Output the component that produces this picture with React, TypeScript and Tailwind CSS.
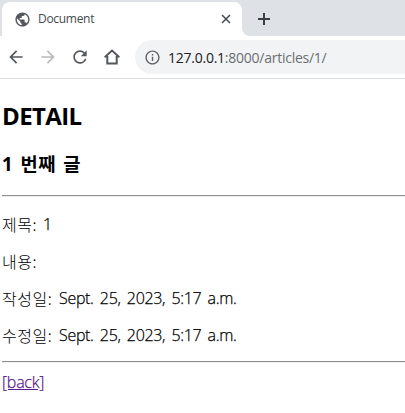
import { MdPublic, MdArrowBack, MdArrowForward, MdRefresh, MdInfoOutline } from 'react-icons/md';

const latin = "font-['Open_Sans','Noto_Sans_CJK_KR',sans-serif]";
const korean = "font-['Noto_Sans_CJK_KR',sans-serif]";

function Row({ label, labelClass, value }: { label: string; labelClass: string; value: string }) {
  return (
    <p className="mb-4 flex h-[21px] items-center whitespace-pre text-[16px] leading-[21px]">
      <span className={`${korean} ${labelClass} shrink-0 pt-px font-light tracking-[0.5px]`}>{label}</span>
      <span className={`${latin} pt-px font-light tracking-[-0.32px] [-webkit-text-stroke:0.25px] [word-spacing:2.4px]`}>{value}</span>
    </p>
  );
}

function Rule() {
  return <hr className="h-[2px] border-0 border-t border-t-[#8f8f8f] bg-[#eeeeee]" />;
}

export default function App() {
  return (
    <div className={`${latin} h-[413px] w-[405px] overflow-hidden bg-white text-black`}>
      <header>
        <div className="flex h-9 bg-[#dee1e6] pl-[2px] pt-[2px]">
          <div className="flex h-[34px] w-[240px] items-center rounded-t-lg bg-white pl-[12px] pr-[10px]">
            <MdPublic className="size-[17px] text-[#54585d]" />
            <span className="ml-[7px] text-[12px] tracking-[-0.3px] text-[#45494d]">Document</span>
            <svg className="ml-auto size-3" viewBox="0 0 12 12" fill="none" stroke="#45494d" strokeWidth="1.5">
              <path d="M2 2l8 8M10 2l-8 8" />
            </svg>
          </div>
          <div className="flex w-2 items-end bg-white">
            <div className="h-full w-full rounded-bl-lg bg-[#dee1e6]" />
          </div>
          <svg className="ml-[7px] mt-[10px] size-[14px]" viewBox="0 0 14 14" fill="none" stroke="#3c4043" strokeWidth="2">
            <path d="M7 1v12M1 7h12" />
          </svg>
        </div>
        <div className="flex h-[43px] items-center border-b border-[#dadce0] text-[#54585d]">
          <MdArrowBack className="ml-[6px] size-5 shrink-0" />
          <MdArrowForward className="ml-3 size-5 shrink-0 text-[#babcbe]" />
          <MdRefresh className="ml-3 size-5 shrink-0" />
          <svg className="ml-3 size-5 shrink-0" viewBox="0 0 20 20" fill="none" stroke="currentColor" strokeWidth="2">
            <path d="M2.7 10.3L10 3.6l7.3 6.7M5.3 9v7.5h9.4V9" />
          </svg>
          <div className="ml-[13px] flex h-[34px] flex-1 items-center rounded-l-full bg-[#f1f3f4] pl-[9px]">
            <MdInfoOutline className="size-[17px] text-[#5f6368]" />
            <span className="ml-[7px] text-[14px] tracking-[-0.25px] text-[#6b6f73]">
              <span className="text-[#202124]">127.0.0.1</span>:8000/articles/1/
            </span>
          </div>
        </div>
      </header>
      <main className="pl-[2px] pt-[21px]">
        <h2 className="h-8 text-[24px] font-bold leading-8 tracking-[-0.6px]">DETAIL</h2>
        <h3 className={`${korean} mt-[18px] h-[25px] whitespace-pre text-[18.72px] font-bold leading-[25px] tracking-[0.5px] [word-spacing:2.6px]`}>
          <span className={latin}>1</span> 번째 글
        </h3>
        <div className="pt-[20px]"><Rule /></div>
        <div className="pt-4">
          <Row label="제목:" labelClass="w-[41px]" value="1" />
          <Row label="내용:" labelClass="w-[41px]" value="" />
          <Row label="작성일:" labelClass="w-[57px]" value="Sept. 25, 2023, 5:17 a.m." />
          <Row label="수정일:" labelClass="w-[57px]" value="Sept. 25, 2023, 5:17 a.m." />
        </div>
        <Rule />
        <div className="mt-[9px] h-[21px] text-[16px] leading-[21px]">
          <a href="#" className="font-light tracking-[-0.25px] text-[#551a8b] underline [-webkit-text-stroke:0.25px]">[back]</a>
        </div>
      </main>
    </div>
  );
}
